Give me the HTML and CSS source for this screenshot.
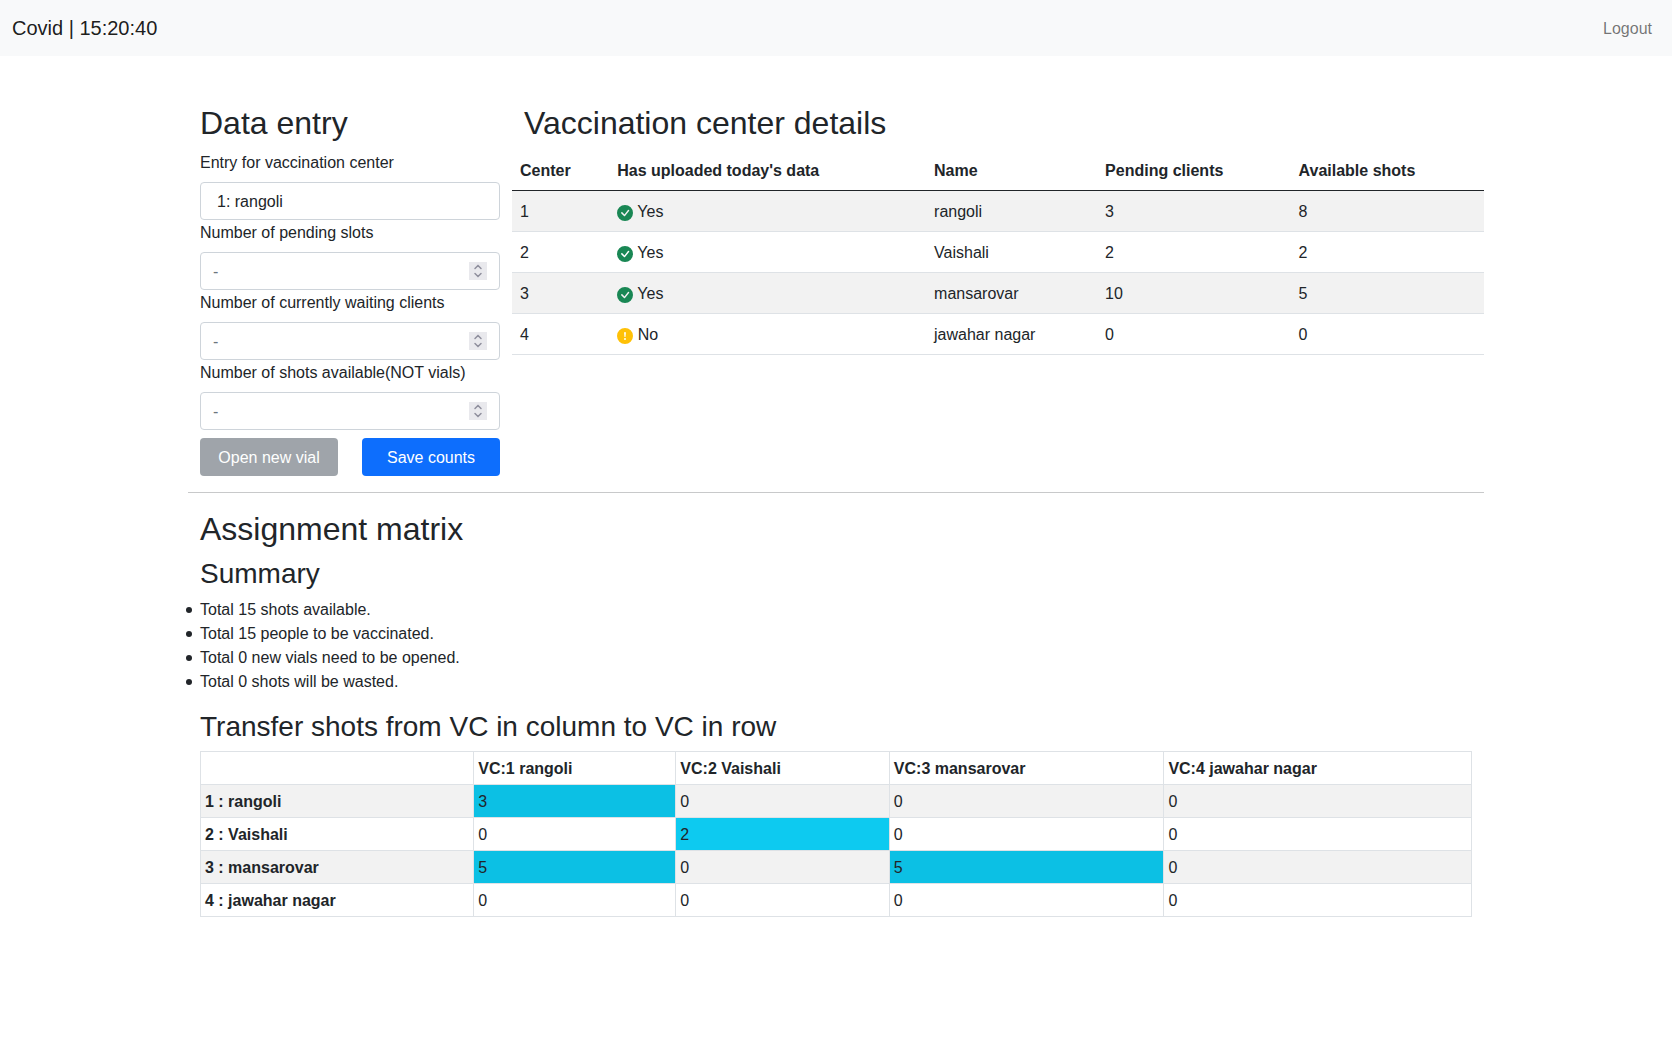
FILE: index.html
```html
<!DOCTYPE html>
<html lang="en">
<head>
  <meta charset="utf-8">
  <meta name="viewport" content="width=device-width, initial-scale=1">
  <title>Covid</title>
  <link rel="stylesheet" href="styles.css">
</head>
<body>
  <svg class="sprite" aria-hidden="true">
    <symbol id="check" viewBox="0 0 16 16"><path d="M16 8A8 8 0 1 1 0 8a8 8 0 0 1 16 0zm-3.97-3.03a.75.75 0 0 0-1.08.022L7.477 9.417 5.384 7.323a.75.75 0 0 0-1.06 1.06L6.97 11.03a.75.75 0 0 0 1.079-.02l3.992-4.99a.75.75 0 0 0-.01-1.05z"/></symbol>
    <symbol id="warn" viewBox="0 0 16 16"><path d="M16 8A8 8 0 1 1 0 8a8 8 0 0 1 16 0zM8 4a.905.905 0 0 0-.9.995l.35 3.507a.552.552 0 0 0 1.1 0l.35-3.507A.905.905 0 0 0 8 4zm.002 6a1 1 0 1 0 0 2 1 1 0 0 0 0-2z"/></symbol>
    <symbol id="spin" viewBox="0 0 18 18"><rect width="18" height="18" fill="#e9e9ed"/><path d="M6 6.500l3-3 3 3M6 11.500l3 3 3-3" fill="none" stroke="#8f8f9d" stroke-width="1.500" stroke-linecap="round"/></symbol>
  </svg>

  <nav class="navbar">
    <a class="brand" href="#">Covid | 15:20:40</a>
    <a class="nav-link" href="#">Logout</a>
  </nav>

  <main class="container">
    <div class="top">
      <form class="entry">
        <h2>Data entry</h2>
        <label for="center">Entry for vaccination center</label>
        <select class="control select" id="center">
          <option>1: rangoli</option>
        </select>
        <label for="slots">Number of pending slots</label>
        <div class="number">
          <input class="control" id="slots" type="number" placeholder="-">
          <svg class="spinner" aria-hidden="true"><use href="#spin"/></svg>
        </div>
        <label for="waiting">Number of currently waiting clients</label>
        <div class="number">
          <input class="control" id="waiting" type="number" placeholder="-">
          <svg class="spinner" aria-hidden="true"><use href="#spin"/></svg>
        </div>
        <label for="shots">Number of shots available(NOT vials)</label>
        <div class="number">
          <input class="control" id="shots" type="number" placeholder="-">
          <svg class="spinner" aria-hidden="true"><use href="#spin"/></svg>
        </div>
        <div class="actions">
          <button class="btn btn-secondary" type="button" disabled>Open new vial</button>
          <button class="btn btn-primary" type="button">Save counts</button>
        </div>
      </form>

      <section class="details">
        <h2>Vaccination center details</h2>
        <table class="centers">
          <colgroup>
            <col class="c-id"><col class="c-status"><col class="c-name"><col class="c-count"><col class="c-count">
          </colgroup>
          <thead>
            <tr><th scope="col">Center</th><th scope="col">Has uploaded today's data</th><th scope="col">Name</th><th scope="col">Pending clients</th><th scope="col">Available shots</th></tr>
          </thead>
          <tbody>
            <tr><td>1</td><td><svg class="icon ok" aria-hidden="true"><use href="#check"/></svg> Yes</td><td>rangoli</td><td>3</td><td>8</td></tr>
            <tr><td>2</td><td><svg class="icon ok" aria-hidden="true"><use href="#check"/></svg> Yes</td><td>Vaishali</td><td>2</td><td>2</td></tr>
            <tr><td>3</td><td><svg class="icon ok" aria-hidden="true"><use href="#check"/></svg> Yes</td><td>mansarovar</td><td>10</td><td>5</td></tr>
            <tr><td>4</td><td><svg class="icon warning" aria-hidden="true"><use href="#warn"/></svg> No</td><td>jawahar nagar</td><td>0</td><td>0</td></tr>
          </tbody>
        </table>
      </section>
    </div>

    <hr>

    <section class="assignment">
      <h2>Assignment matrix</h2>
      <h3>Summary</h3>
      <ul class="summary">
        <li>Total 15 shots available.</li>
        <li>Total 15 people to be vaccinated.</li>
        <li>Total 0 new vials need to be opened.</li>
        <li>Total 0 shots will be wasted.</li>
      </ul>
      <h3>Transfer shots from VC in column to VC in row</h3>
      <table class="matrix">
        <colgroup>
          <col class="m-head"><col class="m-1"><col class="m-2"><col class="m-3"><col class="m-4">
        </colgroup>
        <thead>
          <tr><td></td><th scope="col">VC:1 rangoli</th><th scope="col">VC:2 Vaishali</th><th scope="col">VC:3 mansarovar</th><th scope="col">VC:4 jawahar nagar</th></tr>
        </thead>
        <tbody>
          <tr><th scope="row">1 : rangoli</th><td class="active">3</td><td>0</td><td>0</td><td>0</td></tr>
          <tr><th scope="row">2 : Vaishali</th><td>0</td><td class="active">2</td><td>0</td><td>0</td></tr>
          <tr><th scope="row">3 : mansarovar</th><td class="active">5</td><td>0</td><td class="active">5</td><td>0</td></tr>
          <tr><th scope="row">4 : jawahar nagar</th><td>0</td><td>0</td><td>0</td><td>0</td></tr>
        </tbody>
      </table>
    </section>
  </main>
</body>
</html>
```
FILE: styles.css
```css
*, *::before, *::after { box-sizing: border-box; }

body {
  margin: 0;
  font: 16px/24px "Liberation Sans", Arial, sans-serif;
  color: #212529;
  background: #fff;
}

.sprite { display: none; }

h2, h3 { font-weight: 400; }
h2 { margin: 0 0 8px; font-size: 32px; line-height: 38px; }
h3 { margin: 0 0 7px; font-size: 28px; line-height: 34px; }

.navbar {
  display: flex;
  align-items: center;
  justify-content: space-between;
  min-height: 56px;
  padding: 0 12px;
  background: #f8f9fa;
}
.navbar a { text-decoration: none; }
.brand { font-size: 20px; line-height: 30px; color: rgba(0, 0, 0, .9); }
.nav-link { padding: 9px 8px 7px; color: rgba(0, 0, 0, .55); }

.container { max-width: 1320px; margin: 48px auto; padding: 0 12px; }

.top { display: grid; grid-template-columns: 1fr 3fr; }
.entry { padding: 0 12px; }
.details { min-width: 0; }
.details h2 { padding: 0 12px; }

label { display: block; padding-top: 1px; margin-bottom: 7px; }
.control {
  display: block;
  width: 100%;
  height: 38px;
  padding: 7px 12px 5px;
  border: 1px solid #ced4da;
  border-radius: 4px;
  font: inherit;
  color: inherit;
  background: #fff;
  appearance: none;
}
.select { padding: 7px 16px 5px; }
.control::placeholder { color: #6c757d; opacity: 1; }
.control[type="number"] { appearance: textfield; }
.number { position: relative; }
.spinner { position: absolute; top: 10px; right: 13px; width: 18px; height: 18px; }

.actions { display: grid; grid-template-columns: 1fr 1fr; gap: 24px; margin-top: 8px; }
.btn {
  height: 38px;
  padding: 2px 0 0;
  border: 0;
  border-radius: 4px;
  font: inherit;
  color: #fff;
}
.btn-primary { background: #0d6efd; }
.btn-secondary { background: #6c757d; }
.btn:disabled { opacity: .65; }

table { width: 100%; border-collapse: collapse; table-layout: fixed; }
th, td { text-align: left; vertical-align: top; }
tbody tr:nth-child(odd) { background: #f2f2f2; }

.centers th, .centers td { padding: 9px 8px 7px; border-bottom: 1px solid #dee2e6; }
.centers thead th { border-bottom-color: #212529; }
.c-id { width: 10%; }
.c-status { width: 32.600%; }
.c-name { width: 17.600%; }
.c-count { width: 19.900%; }

.icon { width: 16px; height: 16px; vertical-align: -4px; }
.ok { fill: #198754; }
.warning { fill: #ffc107; }

hr { height: 1px; margin: 16px 0; border: 0; background: #c8c9ca; }

.assignment { padding: 1px 12px 0; }
.assignment h2 { margin-bottom: 9px; }

.summary { margin: 0 0 16px -14px; padding: 0; list-style: none; }
.summary li { display: flex; align-items: center; gap: 8px; }
.summary li::before {
  content: "";
  width: 6px;
  height: 6px;
  border-radius: 50%;
  background: #212529;
}

.matrix th, .matrix td { padding: 5px 4px 3px; border: 1px solid #dee2e6; }
.matrix .active { background: #0dcaf0; }
.matrix tr:nth-child(odd) .active { background: #0cc0e4; }
.m-head { width: 21.500%; }
.m-1 { width: 15.900%; }
.m-2 { width: 16.800%; }
.m-3 { width: 21.600%; }
.m-4 { width: 24.200%; }

@media (max-width: 900px) {
  .top { grid-template-columns: 1fr; gap: 24px; }
  .details, .assignment { overflow-x: auto; }
  .summary { margin-left: 0; }
}
```
